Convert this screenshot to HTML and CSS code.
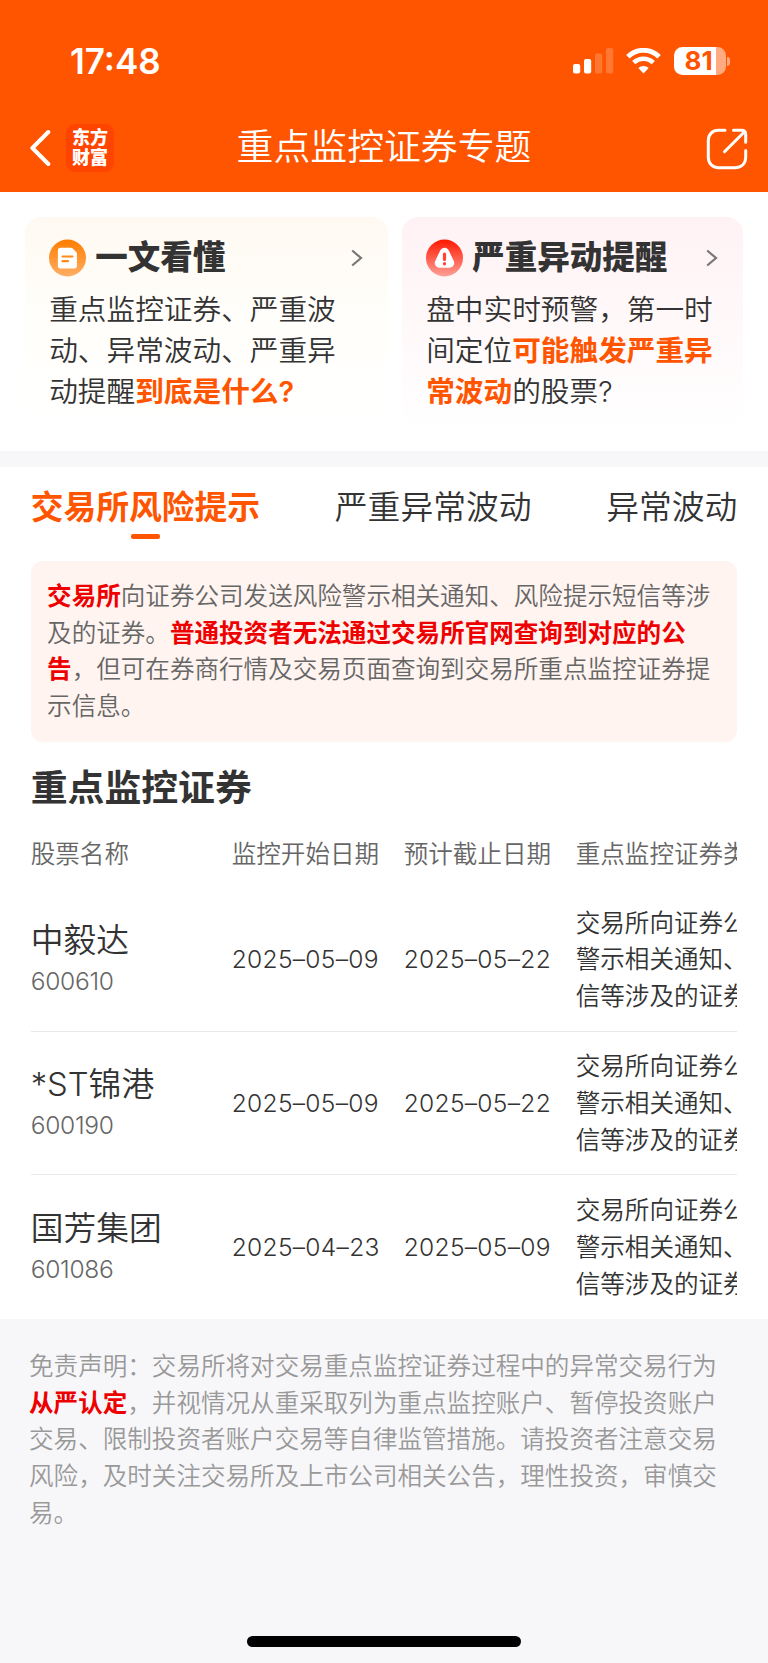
FILE: index.html
```html
<!DOCTYPE html>
<html lang="zh-CN">
<head>
  <meta charset="UTF-8" />
  <meta name="viewport" content="width=device-width, initial-scale=1.0"/>
  <title>重点监控证券专题</title>
  <link rel="stylesheet" href="styles.css">
</head>
<body>
  <header class="header">
    <div class="status-bar">
      <span class="time">17:48</span>
      <div class="status-icons">
        <svg class="signal" width="41" height="26" viewBox="0 0 41 26" fill="#fff">
          <rect x="0" y="16" width="7.2" height="9.5" rx="2"/>
          <rect x="11" y="11" width="7.2" height="14.5" rx="2"/>
          <rect x="22" y="5.5" width="7.2" height="20" rx="2" opacity=".2"/>
          <rect x="33" y="0" width="7.2" height="25.5" rx="2" opacity=".2"/>
        </svg>
        <svg class="wifi" width="35" height="26" viewBox="0 0 35 26" fill="none" stroke="#fff">
          <path d="M1.9 8.7a22.3 22.3 0 0 1 31.2 0" stroke-width="5"/>
          <path d="M7.7 14.7a14 14 0 0 1 19.6 0" stroke-width="4.6"/>
          <path d="M17.5 25.5l-5.2-5.4a7.6 7.6 0 0 1 10.4 0z" fill="#fff" stroke="none"/>
        </svg>
        <div class="battery"><span>81</span></div>
        <i class="battery-tip"></i>
      </div>
    </div>
    <div class="nav">
      <svg class="back" width="22" height="38" viewBox="0 0 22 38" fill="none" stroke="#fff" stroke-width="4" stroke-linecap="round" stroke-linejoin="round">
        <path d="M19.300 3L3.400 19l15.900 16"/>
      </svg>
      <div class="logo">东方<br>财富</div>
      <h1>重点监控证券专题</h1>
      <svg class="share" width="42" height="42" viewBox="0 0 42 42" fill="none" stroke="#fff" stroke-width="3" stroke-linecap="round" stroke-linejoin="round">
        <path d="M19 2.300h-6.500C6.500 2.300 2.300 6.500 2.300 12.500v16.500C2.300 35.500 6.500 39.700 12.500 39.700h16.500C35.500 39.700 39.700 35.500 39.700 29v-6.500"/>
        <path d="M27.500 2.300h8c2.700 0 4.200 1.500 4.200 4.200v7.700M38.500 3.700L18.500 23.700"/>
      </svg>
    </div>
  </header>

  <section class="cards">
    <div class="card card-guide">
      <div class="card-title">
        <svg width="38" height="38" viewBox="0 0 38 38">
          <defs>
            <linearGradient id="orange" x1="0" y1="0" x2="0" y2="1">
              <stop offset="0" stop-color="#ff7d00"/>
              <stop offset="1" stop-color="#ffae66"/>
            </linearGradient>
          </defs>
          <circle cx="18.500" cy="19" r="18.500" fill="url(#orange)"/>
          <path d="M11.500 8.800h10.200a3 3 0 0 1 2 .8l3.300 3.100a3 3 0 0 1 .9 2.100v12a2.600 2.600 0 0 1-2.600 2.600H11.500a2.600 2.600 0 0 1-2.600-2.600V11.400A2.600 2.600 0 0 1 11.500 8.800z" fill="#fff"/>
          <path d="M13.500 17.500h10M13.500 22.200h5.500" stroke="#ff8a1a" stroke-width="2.200" stroke-linecap="round"/>
        </svg>
        <h2>一文看懂</h2>
        <svg class="arrow" width="12" height="18" viewBox="0 0 12 18" fill="none" stroke="#777" stroke-width="2.200">
          <path d="M1.200 1.500L10 9l-8.800 7.500"/>
        </svg>
      </div>
      <p>重点监控证券、严重波动、异常波动、严重异动提醒<b>到底是什么?</b></p>
    </div>
    <div class="card card-alert">
      <div class="card-title">
        <svg width="38" height="38" viewBox="0 0 38 38">
          <defs>
            <linearGradient id="red" x1="0" y1="0" x2="0" y2="1">
              <stop offset="0" stop-color="#ff1800"/>
              <stop offset="1" stop-color="#ffa098"/>
            </linearGradient>
          </defs>
          <circle cx="18.500" cy="19" r="18.500" fill="url(#red)"/>
          <path d="M18.500 13.500L13.500 24h10z" fill="#fff" stroke="#fff" stroke-width="9.500" stroke-linejoin="round"/>
          <path d="M18.500 15v5.500M18.500 24.600v.2" stroke="#f43" stroke-width="3.200" stroke-linecap="round"/>
        </svg>
        <h2>严重异动提醒</h2>
        <svg class="arrow" width="12" height="18" viewBox="0 0 12 18" fill="none" stroke="#777" stroke-width="2.200">
          <path d="M1.200 1.500L10 9l-8.800 7.500"/>
        </svg>
      </div>
      <p>盘中实时预警，第一时间定位<b>可能触发严重异常波动</b>的股票?</p>
    </div>
  </section>

  <main class="content">
    <nav class="tabs">
      <a class="tab active">交易所风险提示</a>
      <a class="tab">严重异常波动</a>
      <a class="tab">异常波动</a>
    </nav>

    <p class="notice"><b>交易所</b>向证券公司发送风险警示相关通知、风险提示短信等涉及的证券。<b>普通投资者无法通过交易所官网查询到对应的公告</b>，但可在券商行情及交易页面查询到交易所重点监控证券提示信息。</p>

    <h3>重点监控证券</h3>

    <div class="table">
      <div class="row head">
        <div>股票名称</div>
        <div>监控开始日期</div>
        <div>预计截止日期</div>
        <div>重点监控证券类型</div>
      </div>
      <div class="row">
        <div class="stock">
          <div class="name">中毅达</div>
          <div class="code">600610</div>
        </div>
        <div class="date">2025–05–09</div>
        <div class="date">2025–05–22</div>
        <div class="type">交易所向证券公司发送风险警示相关通知、风险提示短信等涉及的证券</div>
      </div>
      <div class="row">
        <div class="stock">
          <div class="name">*ST锦港</div>
          <div class="code">600190</div>
        </div>
        <div class="date">2025–05–09</div>
        <div class="date">2025–05–22</div>
        <div class="type">交易所向证券公司发送风险警示相关通知、风险提示短信等涉及的证券</div>
      </div>
      <div class="row">
        <div class="stock">
          <div class="name">国芳集团</div>
          <div class="code">601086</div>
        </div>
        <div class="date">2025–04–23</div>
        <div class="date">2025–05–09</div>
        <div class="type">交易所向证券公司发送风险警示相关通知、风险提示短信等涉及的证券</div>
      </div>
    </div>
  </main>

  <footer class="footer">
    <p>免责声明：交易所将对交易重点监控证券过程中的异常交易行为<b>从严认定</b>，并视情况从重采取列为重点监控账户、暂停投资账户交易、限制投资者账户交易等自律监管措施。请投资者注意交易风险，及时关注交易所及上市公司相关公告，理性投资，审慎交易。</p>
    <div class="home-indicator"></div>
  </footer>
</body>
</html>
```

FILE: styles.css
```css
* {
  box-sizing: border-box;
  margin: 0;
  padding: 0;
}

body {
  width: 768px;
  height: 1663px;
  overflow: hidden;
  display: flex;
  flex-direction: column;
  font-family: Inter, "Noto Sans CJK SC", sans-serif;
  font-size: 24.576px;
  font-weight: 350;
  line-height: 36.86px;
  color: #333;
  background: #fff;
}

svg {
  display: block;
  flex: none;
}

/* header */
.header {
  height: 192.4px;
  flex: none;
  background: #ff5500;
  color: #fff;
}

.status-bar {
  height: 102px;
  padding: 20px 38px 0 70px;
  display: flex;
  justify-content: space-between;
  align-items: center;
}

.time {
  font-size: 35px;
  font-weight: 600;
}

.status-icons {
  display: flex;
  align-items: center;
}

.wifi {
  margin: 0 13px 0 12px;
}

.battery {
  width: 52px;
  height: 28.5px;
  border-radius: 8.5px;
  background: linear-gradient(90deg, #fff 81%, #ffaa80 81%);
  color: #ff5500;
  font-size: 26px;
  font-weight: 700;
  line-height: 28.5px;
  padding-left: 11px;
}

.battery-tip {
  width: 3px;
  height: 9px;
  margin-left: 1.5px;
  border-radius: 0 4px 4px 0;
  background: #ffaa80;
}

.nav {
  height: 90.4px;
  padding: 1px 20px 0 29px;
  display: flex;
  align-items: center;
}

.logo {
  width: 48px;
  height: 48px;
  margin-left: 15px;
  padding-top: 4px;
  border-radius: 9px;
  background: #ff4400;
  font-size: 18px;
  font-weight: 900;
  line-height: 20.3px;
  text-align: center;
}

.nav h1 {
  flex: 1;
  margin: 0 101px 0 49px;
  text-align: center;
  font-size: 36.86px;
  font-weight: 350;
}

.share {
  margin-top: 3px;
}

/* cards */
.cards {
  height: 258.4px;
  flex: none;
  padding: 25px 25px 19.5px;
  display: flex;
  gap: 14px;
}

.card {
  padding: 22px 24.6px 0 24.2px;
  border-radius: 16.4px;
}

.card-guide {
  width: 363px;
  background: linear-gradient(180deg, #fff9f2, #fffefa 45%, #fff);
}

.card-alert {
  width: 341px;
  background: linear-gradient(180deg, #fff2f4, #fff);
}

.card-title {
  height: 38px;
  display: flex;
  align-items: center;
}

.card-title h2 {
  flex: 1;
  margin-left: 8px;
  font-size: 32.5px;
  font-weight: 900;
  white-space: nowrap;
}

.card p {
  width: 290px;
  margin-top: 12.8px;
  font-size: 28.67px;
  line-height: 40.96px;
}

.card b {
  font-weight: 600;
  color: #ff5500;
}

/* tabs + table */
.content {
  height: 867.9px;
  flex: none;
  padding: 0 30.7px;
  border-top: 16px solid #f7f7fa;
}

.tabs {
  height: 94.6px;
  padding-top: 18px;
  display: flex;
  justify-content: space-between;
}

.tab {
  font-size: 32.77px;
  line-height: 44px;
}

.tab.active {
  color: #ff5500;
  font-weight: 600;
}

.tab.active::after {
  content: "";
  display: block;
  width: 28.67px;
  height: 4.5px;
  margin: 5.5px auto 0;
  border-radius: 2px;
  background: #ff5500;
}

.notice {
  padding: 16.4px;
  border-radius: 12px;
  background: #fff4f0;
  color: #666;
}

.notice b,
.footer b {
  color: #ee0000;
  font-weight: 600;
}

.content h3 {
  margin-top: 24.6px;
  font-size: 36.86px;
  line-height: 44px;
  font-weight: 600;
}

.table {
  margin-top: 9px;
  overflow: hidden;
}

.row {
  height: 143.36px;
  padding-top: 1px;
  display: grid;
  grid-template-columns: 201px 172px 172px 297px;
  align-items: center;
  border-bottom: 1px solid #e9e9eb;
}

.row:last-child {
  border-bottom: none;
}

.row.head {
  height: 69px;
  border: none;
  color: #666;
}

.name {
  font-size: 32.77px;
  line-height: 44px;
}

.code {
  line-height: 39px;
  color: #666;
  letter-spacing: -0.3px;
}

.date {
  letter-spacing: 0.3px;
}

/* footer */
.footer {
  flex: 1;
  padding: 29px 28.67px 0 29px;
  display: flex;
  flex-direction: column;
  justify-content: space-between;
  align-items: center;
  background: #f7f7fa;
  color: #999;
}

.home-indicator {
  width: 274.5px;
  height: 10.5px;
  margin-bottom: 16.2px;
  border-radius: 6px;
  background: #000;
}
```
